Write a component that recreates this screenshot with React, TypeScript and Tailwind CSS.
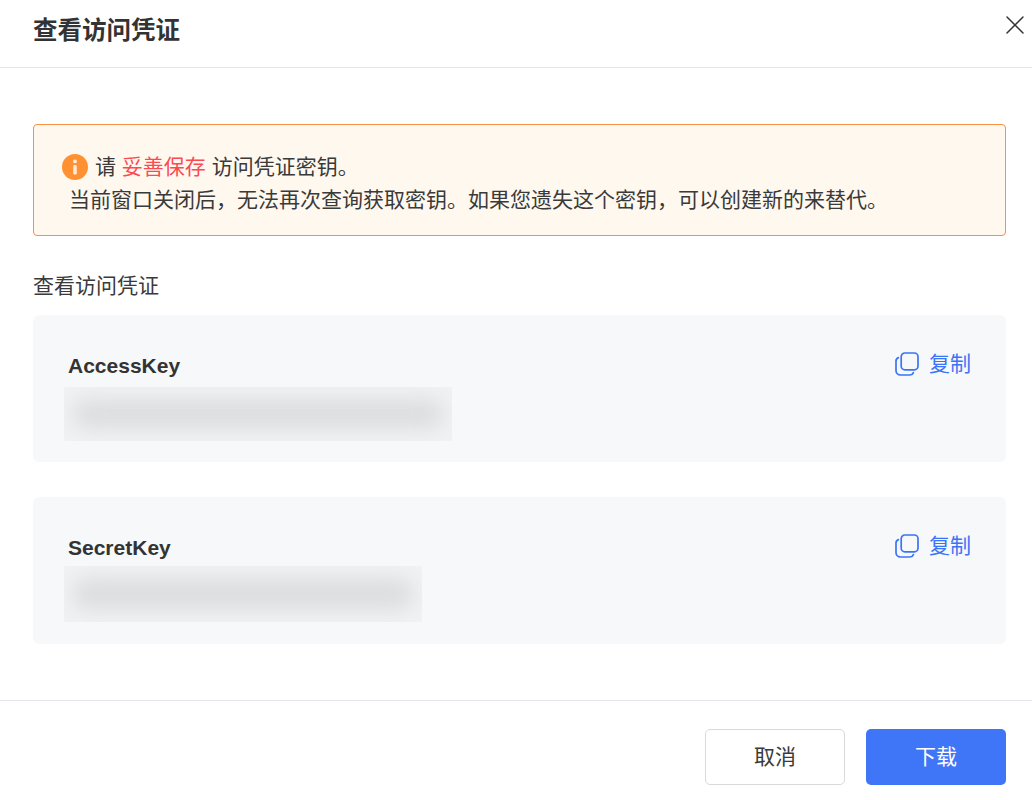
import { X } from "lucide-react";

const cjk = "font-['Liberation_Sans','Noto_Sans_CJK_SC',sans-serif]";

function CopyButton() {
  return (
    <button className="flex items-center gap-[10px] text-[21px] leading-[28px] text-[#3b74f6]">
      <svg width="24" height="24" viewBox="0 0 24 24" fill="none" stroke="currentColor" strokeWidth="1.7">
        <rect x="6.2" y="1" width="16.8" height="16.8" rx="3.6" />
        <path d="M3.4 5.6 C2 6.2 1 7.4 1 9 V18.6 C1 21 3 23 5.4 23 H15 C16.6 23 17.8 22 18.4 20.6" strokeLinecap="round" />
      </svg>
      复制
    </button>
  );
}

function KeyCard({ label, box, top }: { label: string; box: string; top: string }) {
  return (
    <div className={`flex h-[147px] flex-col rounded-[6px] bg-[#f7f8fa] pl-[31px] pr-[35px] pt-[37px] ${top}`}>
      <div className="flex items-start justify-between">
        <div className="pl-1 font-bold text-[21px] leading-[28px] text-[#333333]">{label}</div>
        <div className="-mt-[2px]"><CopyButton /></div>
      </div>
      <div className={`overflow-hidden bg-[#f1f2f4] ${box}`}>
        <div className="mx-[8px] mt-[12px] h-[calc(100%-24px)] rounded-full bg-[#dcdddf] blur-[10px]" />
      </div>
    </div>
  );
}

export default function App() {
  return (
    <div className={`flex h-[800px] w-[1032px] flex-col overflow-hidden bg-white text-[#333333] ${cjk}`}>
      <div className="relative flex h-[68px] shrink-0 items-start border-b border-[#e4e5e9] pl-[33px] pt-[13px]">
        <h1 className="text-[24.5px] font-bold leading-[36px] text-[#333333]">查看访问凭证</h1>
        <button className="absolute right-[1px] top-[9px] text-[#333333]">
          <X size={32} strokeWidth={1.1} />
        </button>
      </div>

      <div className="flex flex-1 flex-col pl-[33px] pr-[26px] pt-[56px]">
        <div className="h-[112px] rounded-[4px] border border-[#f79145] bg-[#fff8ef] pl-[28px] pt-[25px] text-[21px] leading-[33px] text-[#3a3a3a]">
          <div className="flex items-center">
            <span className="mr-[7px] flex h-[26px] w-[26px] items-center justify-center rounded-full bg-[#ff9133]">
              <svg width="6" height="16" viewBox="0 0 6 16" fill="#ffe9d6">
                <circle cx="3" cy="2.4" r="1.9" />
                <rect x="1.2" y="6" width="3.6" height="9.4" rx="1" />
              </svg>
            </span>
            <span>
              请 <span className="text-[#fb4b52]">妥善保存</span> 访问凭证密钥。
            </span>
          </div>
          <div className="pl-[7px]">当前窗口关闭后，无法再次查询获取密钥。如果您遗失这个密钥，可以创建新的来替代。</div>
        </div>

        <div className="mt-[34px] text-[21px] leading-[32px] text-[#3a3a3a]">查看访问凭证</div>

        <KeyCard label="AccessKey" box="mt-[7px] h-[54px] w-[388px]" top="mt-[13px]" />
        <KeyCard label="SecretKey" box="mt-[4px] h-[56px] w-[358px]" top="mt-[35px]" />
      </div>

      <div className="flex h-[100px] shrink-0 justify-end gap-[21px] border-t border-[#e4e5ee] pr-[26px] pt-[28px]">
        <button className="h-[56px] w-[140px] rounded-[5px] border border-[#d9d9dc] bg-white text-[21px] text-[#3a3a3a]">取消</button>
        <button className="h-[56px] w-[140px] rounded-[5px] bg-[#3e76f7] text-[21px] text-white">下载</button>
      </div>
    </div>
  );
}
